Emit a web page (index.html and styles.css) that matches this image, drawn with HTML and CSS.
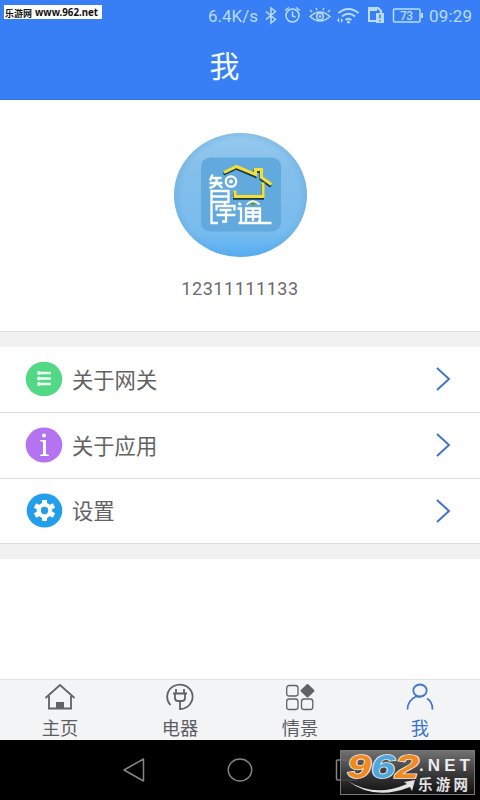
FILE: index.html
```html
<!DOCTYPE html>
<html lang="zh-CN">
<head>
<meta charset="utf-8">
<title>我</title>
<link rel="stylesheet" href="styles.css">
</head>
<body>
<div class="screen">
  <header class="header">
    <div class="site-tag"><svg width="98" height="14"><text x="1" y="11.500" textLength="27" lengthAdjust="spacingAndGlyphs">乐游网</text><text x="31" y="11" textLength="63" lengthAdjust="spacingAndGlyphs" class="tag-url">www.962.net</text></svg></div>
    <div class="status">
      <svg width="272" height="32" viewBox="208 0 272 32">
        <g class="status-text">
          <text x="208" y="21.5" textLength="50">6.4K/s</text>
          <text x="429" y="21.5" textLength="43">09:29</text>
          <text x="400" y="20" textLength="13" class="battery-text">73</text>
        </g>
        <g class="status-line">
          <path d="M266 11.500l9.500 8-4.500 3.500V8l4.500 3.500-9.500 8"/>
          <circle cx="292.500" cy="15.500" r="6.500"/><path d="M292.500 11.500v4.500l3 1M285 10.500l4-3M296 7.500l4 3"/>
          <path d="M310 16.500q10-9 20 0-10 9-20 0zM312 12l-2-2M317 10l-1-2M323 10l1-2M328 12l2-2"/><circle cx="320" cy="16.500" r="3.300"/>
          <path d="M338.500 13q10-8 20 0M342 16.500q6.500-5.500 13 0M345.500 20q3-2.500 6 0" stroke-width="2"/>
          <path d="M376 21h-7V8h9l3 3v2" stroke-width="2"/>
          <rect x="393.500" y="9" width="26.500" height="13" rx="1"/><path d="M422 13v5" stroke-width="2"/>
        </g>
        <g class="status-fill">
          <circle cx="348.500" cy="22" r="1.500"/><circle cx="320" cy="16.500" r="1.300"/>
          <path d="M337 20.500l2-3 .5 5zM341 18v5l2-2.500z"/>
          <path d="M376 13h8v10h-8zM370 8h7v3h-7z"/>
        </g>
        <path d="M380 14.500v4M380 20v1.500" stroke="#387ff5" stroke-width="1.500"/>
      </svg>
    </div>
    <h1 class="title">我</h1>
  </header>

  <section class="profile">
    <svg class="avatar" width="134" height="126" viewBox="0 0 134 126">
      <defs>
        <linearGradient id="ball" x1="0" y1="0" x2="0" y2="1"><stop offset="0" stop-color="#98cbef"/><stop offset=".3" stop-color="#84bfeb"/><stop offset=".8" stop-color="#78bcee"/><stop offset="1" stop-color="#55aef5"/></linearGradient>
        <radialGradient id="rim"><stop offset=".88" stop-color="#5da6dc" stop-opacity="0"/><stop offset="1" stop-color="#5da6dc" stop-opacity=".35"/></radialGradient>
      </defs>
      <ellipse cx="66.500" cy="63" rx="66.500" ry="62" fill="url(#ball)"/>
      <ellipse cx="66.500" cy="63" rx="66.500" ry="62" fill="url(#rim)"/>
      <rect x="27" y="25.500" width="80" height="74" rx="9" fill="#62a9dd"/>
      <g transform="translate(-1.500 .5)">
        <g class="house-shadow" transform="translate(-.5 1.700)"><path d="M51.500 40L64 34l19 8v-5h6v8l10 7M90.500 50v14h-28v-6"/></g>
        <g class="house"><path d="M51.500 40L64 34l19 8v-5h6v8l10 7M90.500 50v14h-28v-6"/></g>
        <g class="logo-line">
          <path d="M40 42l-2.500 6M39 45.500h10M37 50.500h13M44 45.500v5q-2 4-7 5M45 51l5 4.500"/>
          <circle cx="58.500" cy="49" r="5.200"/><circle cx="58.500" cy="49" r=".8"/>
          <path d="M45.500 90.500H39V58.500h17V69.500H39M39 64h17"/>
          <path d="M52.500 70v4M44 78v-4.500h18V78M47 77.500h12M44 82.500h19M53.500 77.500v11.500h-4"/>
          <path d="M66 70.500l2.500 2M65 76h3.500v14.500H99M66 90.500h3M73.500 89V76h14v12.500h-2M73.500 80h14M73.500 84h14M80.500 76v12.500"/>
          <path d="M74 72q6-6.500 13 0" stroke-width="1.800"/>
        </g>
        <ellipse cx="80.500" cy="71.500" rx="2.500" ry="1.800" fill="#6f9b4a"/>
      </g>
    </svg>
    <div class="phone">12311111133</div>
  </section>

  <main class="menu">
    <div class="row">
      <svg class="badge" width="38" height="36" viewBox="0 0 38 36"><ellipse cx="19" cy="18" rx="18.300" ry="17.300" fill="#53d886"/><path d="M13 12h13M13 17.500h13M13 23h13" stroke="#effff4" stroke-width="2.400"/><g fill="#effff4"><circle cx="14" cy="12" r="1.900"/><circle cx="14" cy="17.500" r="1.900"/><circle cx="14" cy="23" r="1.900"/></g></svg>
      <span class="label">关于网关</span>
      <svg class="arrow" width="16" height="26" viewBox="0 0 16 26"><path d="M2 2l12 11L2 24"/></svg>
    </div>
    <div class="row">
      <svg class="badge" width="38" height="36" viewBox="0 0 38 36"><ellipse cx="19" cy="18" rx="18.300" ry="17.500" fill="#b573f2"/><circle cx="19" cy="8.500" r="2" fill="#fff"/><path d="M15 13h6v14l3 1v1h-9v-1l3-1V15l-3-1z" fill="#fff"/></svg>
      <span class="label">关于应用</span>
      <svg class="arrow" width="16" height="26" viewBox="0 0 16 26"><path d="M2 2l12 11L2 24"/></svg>
    </div>
    <div class="row">
      <svg class="badge" width="38" height="36" viewBox="0 0 38 36"><ellipse cx="19.500" cy="17.500" rx="17.800" ry="17" fill="#229eea"/><g transform="translate(19.500 17.500)"><g stroke="#fff" stroke-width="5"><path d="M0-10.500V10.500M-9.500-5L9.500 5M-9.500 5L9.500-5"/></g><circle r="7.800" fill="#fff"/><circle r="3.700" fill="#229eea"/></g></svg>
      <span class="label">设置</span>
      <svg class="arrow" width="16" height="26" viewBox="0 0 16 26"><path d="M2 2l12 11L2 24"/></svg>
    </div>
  </main>

  <nav class="tabs">
    <div class="tab"><svg width="32" height="28" viewBox="0 0 32 28"><path d="M1.500 15L16 2l14.500 13M5 13v12.500h22V13"/><path d="M12 19h8v7h-8z" fill="#606266" stroke="none"/></svg><span>主页</span></div>
    <div class="tab"><svg width="32" height="28" viewBox="0 0 32 28"><path d="M6.500 22A12.700 12.200 0 1 1 16 26v-7M12 6v4M20 6v4M9 10.500h14M11 11v4q0 3 3 3h4q3 0 3-3v-4"/></svg><span>电器</span></div>
    <div class="tab"><svg width="32" height="28" viewBox="0 0 32 28"><g stroke-width="1.300"><rect x="2.700" y="2.500" width="11.300" height="10.500" rx="2.500"/><rect x="2.700" y="16" width="11.300" height="10.500" rx="2.500"/><rect x="17.500" y="16" width="11.300" height="10.500" rx="2.500"/></g><path d="M23.500 2l6 5.700-6 5.700-6-5.700z" fill="#606266" stroke-width="2" stroke-linejoin="round"/></svg><span>情景</span></div>
    <div class="tab active"><svg width="32" height="28" viewBox="0 0 32 28"><ellipse cx="16" cy="7.500" rx="6.700" ry="6"/><path d="M3.500 26.500q0-9 8.500-13M20 12.500q-4 2-8 1M23 15.500q5.500 3 5.500 11"/></svg><span>我</span></div>
  </nav>

  <footer class="system">
    <svg width="480" height="60" viewBox="0 0 480 60">
      <g fill="none" stroke="#858585" stroke-width="1.500" stroke-linejoin="round"><path d="M143.500 19v22L124 30z"/><ellipse cx="240" cy="30" rx="11.700" ry="11"/><rect x="336.500" y="20" width="21" height="20" rx="1"/></g>
    </svg>
    <div class="watermark">
      <svg width="135" height="45" viewBox="0 0 135 45">
        <path d="M8 31q27 17 59 3l-3-2 11-2-3 11-2-4Q34 51 8 31z" fill="#e4e4e4"/>
        <text x="7" y="27.500" textLength="72" lengthAdjust="spacingAndGlyphs" class="digits"><tspan fill="#ef8922">9</tspan><tspan fill="#4ca6df">6</tspan><tspan fill="#ef8922">2</tspan></text>
        <text x="79" y="21" textLength="51" class="net">.NET</text>
        <text x="78" y="39.500" textLength="50" class="mark-name">乐游网</text>
      </svg>
    </div>
  </footer>
</div>
</body>
</html>
```
FILE: styles.css
```css
* { box-sizing: border-box; }
body { margin: 0; font-family: Roboto, "Noto Sans CJK SC", sans-serif; }
svg { display: block; flex: none; }
.screen { position: relative; width: 480px; height: 800px; display: flex; flex-direction: column; background: #fff; overflow: hidden; }
.header { position: relative; height: 100px; background: #387ff5; border-bottom: 1px solid #3474df; }
.site-tag { position: absolute; left: 4px; top: 5px; width: 98px; height: 14px; background: #fff; overflow: hidden; }
.site-tag text { font: bold 9px "Noto Sans CJK SC", sans-serif; fill: #111; }
.site-tag .tag-url { font: bold 10px "Noto Sans", sans-serif; }
.status { display: flex; justify-content: flex-end; height: 32px; }
.status-text { font-size: 17px; fill: #b9dcff; }
.battery-text { font-size: 12px; font-weight: 500; }
.status-line { fill: none; stroke: #b9dcff; stroke-width: 1.5; }
.status-fill { fill: #b9dcff; }
.title { margin: 0; padding: 1px 31px 0 0; height: 67px; line-height: 67px; text-align: center; color: #f1faff; font-size: 30px; font-weight: 400; }
.profile { height: 232px; padding-top: 32px; display: flex; flex-direction: column; align-items: center; border-bottom: 1px solid #dedede; }
.avatar { margin-left: 2px; }
.house, .house-shadow { fill: none; stroke: #f4df35; stroke-width: 3; }
.house-shadow { stroke: #17364a; }
.logo-line { fill: none; stroke: #fff; stroke-width: 2.3; }
.phone { margin-top: 18px; line-height: 26px; font-size: 18px; letter-spacing: .55px; color: #6b6b6b; }
.menu { height: 227px; padding: 15px 0; background: #f1f1f1; }
.row { height: 66px; padding: 0 29px 2px 25px; display: flex; align-items: center; background: #fff; border-bottom: 1px solid #dcdcdc; }
.row:last-child { height: 65px; }
.badge, .arrow { margin-top: 1px; }
.label { flex: 1; margin-left: 9px; padding-top: 4px; line-height: 30px; font-size: 21.3px; color: #626262; }
.arrow { fill: none; stroke: #4274c8; stroke-width: 2; }
.tabs { height: 61px; margin-top: auto; display: grid; grid-template-columns: repeat(4, 1fr); background: #f3f4f6; border-top: 1px solid #e1e2e3; }
.tab { display: flex; flex-direction: column; align-items: center; padding-top: 3px; color: #5c5e62; font-size: 18.3px; line-height: 27px; }
.tab > svg { fill: none; stroke: #606266; stroke-width: 1.8; }
.tab span { margin-top: 4px; }
.active { color: #3974ce; }
.active > svg { stroke: #4477c8; }
.system { position: relative; height: 60px; background: #000; }
.watermark { position: absolute; left: 340px; top: 10px; width: 135px; height: 45px; outline: 1px solid #777; outline-offset: -1px; background: linear-gradient(rgba(125,125,125,.92), rgba(65,65,65,.85) 55%, rgba(20,20,20,.75)); }
.watermark svg { overflow: visible; }
.digits { font: italic bold 33px "Liberation Sans", sans-serif; stroke: #f6eee2; stroke-width: 1.6; paint-order: stroke; }
.net { font: bold 17px "Liberation Sans", sans-serif; fill: #ededed; }
.mark-name { font: bold 14.5px "Noto Sans CJK SC", sans-serif; fill: #e2e2e2; }
```
